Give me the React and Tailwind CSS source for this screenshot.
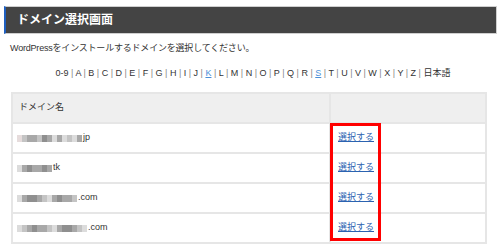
import React from 'react';

const shades = {
  a: 'bg-[#8f8f8f]',
  b: 'bg-[#a8a8a8]',
  c: 'bg-[#c4c4c4]',
  d: 'bg-[#dcdcdc]',
  e: 'bg-[#eeeeee]',
  p: 'bg-[#e6dcdc]',
};

const letters = ['0-9', 'A', 'B', 'C', 'D', 'E', 'F', 'G', 'H', 'I', 'J', 'K', 'L', 'M', 'N', 'O', 'P', 'Q', 'R', 'S', 'T', 'U', 'V', 'W', 'X', 'Y', 'Z', '日本語'];

const rows = [
  { blocks: 'pcbbcabdbdcdb', tld: 'jp' },
  { blocks: 'dbabbab', tld: 'tk' },
  { blocks: 'dbaabcdbabbc', tld: '.com' },
  { blocks: 'dcbabbcdbaabcd', tld: '.com' },
];

// pixelated (blurred) domain name
const Mosaic = ({ blocks }) => (
  <span className="flex items-center">
    {blocks.split('').map((k, i) => (
      <span key={i} className={`inline-block w-[5px] h-[7px] ${shades[k]}`}></span>
    ))}
  </span>
);

const App = () => {
  return (
    <div className="w-[500px] h-[251px] bg-white overflow-hidden font-[family-name:'Liberation_Sans','Noto_Sans_CJK_JP',sans-serif] text-[#333]">
      {/* Title bar */}
      <div className="mt-[6px] ml-[4px] w-[493px] h-[28px] flex items-center bg-[#444] border border-[#cfcfcf] border-l-[2px] border-l-[#1f5fbf]">
        <h1 className="pl-[11px] text-white font-bold text-[12px] leading-none">ドメイン選択画面</h1>
      </div>

      <p className="mt-[8px] pl-[10px] text-[9px] leading-[12px] tracking-[-0.2px]">
        WordPressをインストールするドメインを選択してください。
      </p>

      {/* Alphabet filter */}
      <div className="mt-[13px] pl-[6px] text-center text-[9px] leading-[12px]">
        {letters.map((l, i) => (
          <React.Fragment key={l}>
            {l === 'K' || l === 'S' ? (
              <a className="text-[#4a8fd8] underline">{l}</a>
            ) : (
              <span>{l}</span>
            )}
            {i < letters.length - 1 && <span className="text-[#888]"> | </span>}
          </React.Fragment>
        ))}
      </div>

      {/* Domain table */}
      <div className="relative mt-[13px] ml-[11px] w-[476px]">
        <table className="w-full border-collapse text-[9px]">
          <thead>
            <tr className="h-[30px] bg-[#efefef]">
              <th className="w-[318px] border-2 border-[#e6e6e6] text-left font-normal pl-[6px]">ドメイン名</th>
              <th className="border-2 border-[#e6e6e6]"></th>
            </tr>
          </thead>
          <tbody>
            {rows.map((r, i) => (
              <tr key={i} className="h-[30px]">
                <td className="border-2 border-[#e6e6e6] pl-[4px]">
                  <span className="flex items-center">
                    <Mosaic blocks={r.blocks} />
                    <span className="ml-[1px]">{r.tld}</span>
                  </span>
                </td>
                <td className="border-2 border-[#e6e6e6] pl-[7px]">
                  <a className="text-[#2b62b0] underline">選択する</a>
                </td>
              </tr>
            ))}
          </tbody>
        </table>
        {/* red highlight annotation */}
        <div className="absolute left-[319px] top-[31px] w-[51px] h-[118px] border-[3px] border-[#ff0000]"></div>
      </div>
    </div>
  );
};

export default App;
